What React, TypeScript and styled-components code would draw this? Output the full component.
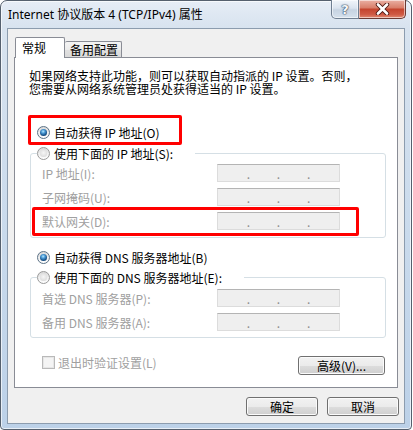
import React from 'react';
import styled, { createGlobalStyle } from 'styled-components';

const CJK_FONT = `"Noto Sans CJK SC", "Noto Sans", sans-serif`;
const TITLE_FONT = `"Noto Sans", "Noto Sans CJK SC", sans-serif`;

const GlobalStyle = createGlobalStyle`
  html, body {
    margin: 0;
    padding: 0;
    background: #ffffff;
  }
  body {
    font-family: ${CJK_FONT};
    font-size: 12px;
    color: #000;
  }
`;

const Window = styled.div`
  position: relative;
  box-sizing: border-box;
  width: 412px;
  height: 430px;
  display: flex;
  flex-direction: column;
  padding: 0 6px 5px 6px;
  border: 1px solid #55606e;
  border-radius: 7px 7px 4px 4px;
  background: linear-gradient(180deg, #e6edf6 0%, #d8e3ef 26px, #c9daec 55%, #bcd1e8 100%);
  box-shadow: inset 0 0 0 1px rgba(255, 255, 255, 0.65);
`;

const TitleBar = styled.div`
  height: 27px;
  display: flex;
  justify-content: space-between;
  align-items: flex-start;
`;

const Title = styled.div`
  margin-left: 1px;
  line-height: 28px;
  font-family: ${TITLE_FONT};
  font-size: 12px;
  color: #000;
  white-space: nowrap;
`;

const Controls = styled.div`
  display: flex;
  margin: -1px -1px 0 0;
`;

const CaptionButton = styled.div<{ $close?: boolean }>`
  box-sizing: border-box;
  height: 19px;
  width: ${p => (p.$close ? '47px' : '28px')};
  display: flex;
  align-items: center;
  justify-content: center;
  border: 1px solid ${p => (p.$close ? '#6b3a33' : '#6f7f92')};
  border-top: none;
  border-left: ${p => (p.$close ? 'none' : undefined)};
  border-radius: ${p => (p.$close ? '0 0 5px 0' : '0 0 0 5px')};
  background: ${p =>
    p.$close
      ? 'linear-gradient(180deg, #eab0a4 0%, #d9806c 42%, #c4452f 52%, #cf5a44 80%, #e08a72 100%)'
      : 'linear-gradient(180deg, #f1f5fa 0%, #dbe4ef 45%, #c6d3e2 55%, #d6e1ed 100%)'};
  box-shadow: inset 0 0 0 1px rgba(255, 255, 255, 0.55);
`;

const HelpGlyph = styled.span`
  font-family: "DejaVu Sans", sans-serif;
  font-weight: bold;
  font-size: 13px;
  line-height: 1;
  color: #f7f9fc;
  text-shadow: 0 0 1px #2e4159, 0 0 1px #2e4159, 0 0 2px #4a5d75;
`;

const Client = styled.div`
  flex: 1;
  display: flex;
  flex-direction: column;
  border: 1px solid #8c9cae;
  background: #f0f0f0;
`;

const TabStrip = styled.div`
  position: relative;
  z-index: 1;
  display: flex;
  align-items: flex-end;
  height: 20px;
  margin: 8px 0 0 7px;
`;

const Tab = styled.div<{ $active?: boolean }>`
  box-sizing: border-box;
  width: ${p => (p.$active ? '50px' : '57px')};
  height: ${p => (p.$active ? '21px' : '16px')};
  margin-bottom: ${p => (p.$active ? '-1px' : '0')};
  padding-left: ${p => (p.$active ? '6px' : '5px')};
  border: 1px solid #898c95;
  border-bottom: none;
  border-left: ${p => (p.$active ? undefined : 'none')};
  border-radius: 2px 2px 0 0;
  background: ${p =>
    p.$active ? '#ffffff' : 'linear-gradient(180deg, #f4f4f4 0%, #ececec 50%, #e1e1e1 51%, #d9d9d9 100%)'};
  line-height: ${p => (p.$active ? '19px' : '15px')};
  font-size: 12px;
  white-space: nowrap;
`;

const Panel = styled.div`
  box-sizing: border-box;
  width: 384px;
  height: 331px;
  margin-left: 6px;
  display: flex;
  flex-direction: column;
  border: 1px solid #898c95;
  background: #ffffff;
`;

const Description = styled.p`
  margin: 11px 0 0 14px;
  line-height: 13px;
  font-size: 12px;
  white-space: nowrap;
`;

const OptionRow = styled.div<{ $top: number }>`
  display: flex;
  align-items: center;
  gap: 4px;
  height: 16px;
  margin: ${p => p.$top}px 0 0 22px;
  white-space: nowrap;
`;

const RadioMark = styled.span<{ $checked?: boolean }>`
  position: relative;
  box-sizing: border-box;
  flex: none;
  width: 13px;
  height: 13px;
  border-radius: 50%;
  border: 1px solid ${p => (p.$checked ? '#5d7387' : '#9a9a9a')};
  background: linear-gradient(180deg, #d9d9d9 0%, #f2f2f2 60%, #ffffff 100%);

  &::after {
    content: '';
    position: absolute;
    inset: 2px;
    border-radius: 50%;
    background: ${p =>
      p.$checked
        ? 'radial-gradient(circle at 45% 35%, #b4e8ff 0%, #4c9bd6 30%, #175289 65%, #0a2c52 100%)'
        : 'radial-gradient(circle at 50% 40%, #f6f6f6 0%, #e2e2e2 60%, #cfcfcf 100%)'};
  }
`;

const Rows = styled.div`
  display: flex;
  flex-direction: column;
  gap: 6px;
  margin-left: 11px;
`;

const Group = styled.div<{ $top: number; $rowsTop: number; $bottom: number }>`
  display: flex;
  flex-direction: column;
  margin: ${p => p.$top}px 11px 0 15px;
  padding-bottom: ${p => p.$bottom}px;
  border: 1px solid #d5dfe5;
  border-radius: 3px;

  & > ${Rows} {
    margin-top: ${p => p.$rowsTop}px;
  }
`;

const Legend = styled.div`
  display: flex;
  align-items: center;
  gap: 4px;
  width: fit-content;
  height: 16px;
  margin: -9px 0 0 6px;
  padding-right: 22px;
  background: #ffffff;
  white-space: nowrap;
`;

const FieldRow = styled.div`
  display: flex;
  align-items: center;
  height: 18px;
`;

const FieldLabel = styled.span`
  width: 175px;
  color: #a0a0a0;
  white-space: nowrap;
`;

const IpBox = styled.div`
  box-sizing: border-box;
  width: 123px;
  height: 18px;
  display: grid;
  grid-template-columns: 1fr auto 1fr auto 1fr auto 1fr;
  align-items: center;
  padding: 0 2px;
  border: 1px solid #dcdcdc;
  border-top-color: #b4b4b4;
  background: #efefef;
`;

const IpDot = styled.span`
  font-size: 12px;
  line-height: 12px;
  padding-top: 2px;
  color: #8c8c8c;
`;

const BottomRow = styled.div`
  display: flex;
  justify-content: space-between;
  align-items: flex-start;
  margin: 18px 12px 0 27px;
`;

const CheckLabel = styled.div`
  display: flex;
  align-items: center;
  gap: 3px;
  height: 14px;
  margin-top: -1px;
  color: #a0a0a0;
  white-space: nowrap;
`;

const CheckMark = styled.span`
  box-sizing: border-box;
  width: 13px;
  height: 13px;
  border: 1px solid #b9b9b9;
  background: #f4f4f4;
  box-shadow: inset 0 0 0 1px #e6e6e6;
`;

const Button = styled.div<{ $width: number }>`
  box-sizing: border-box;
  width: ${p => p.$width}px;
  height: 19px;
  display: flex;
  align-items: center;
  justify-content: center;
  border: 1px solid #707070;
  border-radius: 3px;
  background: linear-gradient(180deg, #f2f2f2 0%, #ebebeb 50%, #dddddd 51%, #cfcfcf 100%);
  box-shadow: inset 0 0 0 1px #fbfbfb;
  font-size: 12px;
  white-space: nowrap;
`;

const Footer = styled.div`
  display: flex;
  justify-content: flex-end;
  gap: 9px;
  margin-top: 9px;
  padding-right: 5px;
`;

const Highlight = styled.div<{ $x: number; $y: number; $w: number; $h: number }>`
  position: absolute;
  box-sizing: border-box;
  left: ${p => p.$x}px;
  top: ${p => p.$y}px;
  width: ${p => p.$w}px;
  height: ${p => p.$h}px;
  border: 3px solid #ff0000;
  border-radius: 2px;
  pointer-events: none;
`;

const CloseIcon = () => (
  <svg width="15" height="12" viewBox="0 0 15 12">
    <path d="M3 1.5 L12 10.5 M12 1.5 L3 10.5" stroke="#4a1510" strokeWidth="4.4" strokeLinecap="round" />
    <path d="M3 1.5 L12 10.5 M12 1.5 L3 10.5" stroke="#ffffff" strokeWidth="2.6" strokeLinecap="round" />
  </svg>
);

const IpField = () => (
  <IpBox>
    <span />
    <IpDot>.</IpDot>
    <span />
    <IpDot>.</IpDot>
    <span />
    <IpDot>.</IpDot>
    <span />
  </IpBox>
);

const ipRows = ['IP 地址(I):', '子网掩码(U):', '默认网关(D):'];
const dnsRows = ['首选 DNS 服务器(P):', '备用 DNS 服务器(A):'];

export default function App() {
  return (
    <>
      <GlobalStyle />
      <Window>
        <TitleBar>
          <Title>Internet 协议版本 4 (TCP/IPv4) 属性</Title>
          <Controls>
            <CaptionButton>
              <HelpGlyph>?</HelpGlyph>
            </CaptionButton>
            <CaptionButton $close>
              <CloseIcon />
            </CaptionButton>
          </Controls>
        </TitleBar>
        <Client>
          <TabStrip>
            <Tab $active>常规</Tab>
            <Tab>备用配置</Tab>
          </TabStrip>
          <Panel>
            <Description>
              如果网络支持此功能，则可以获取自动指派的 IP 设置。否则，
              <br />
              您需要从网络系统管理员处获得适当的 IP 设置。
            </Description>

            <OptionRow $top={29}>
              <RadioMark $checked />
              自动获得 IP 地址(O)
            </OptionRow>

            <Group $top={13} $rowsTop={3} $bottom={7}>
              <Legend>
                <RadioMark />
                使用下面的 IP 地址(S):
              </Legend>
              <Rows>
                {ipRows.map(label => (
                  <FieldRow key={label}>
                    <FieldLabel>{label}</FieldLabel>
                    <IpField />
                  </FieldRow>
                ))}
              </Rows>
            </Group>

            <OptionRow $top={11}>
              <RadioMark $checked />
              自动获得 DNS 服务器地址(B)
            </OptionRow>

            <Group $top={12} $rowsTop={4} $bottom={6}>
              <Legend>
                <RadioMark />
                使用下面的 DNS 服务器地址(E):
              </Legend>
              <Rows>
                {dnsRows.map(label => (
                  <FieldRow key={label}>
                    <FieldLabel>{label}</FieldLabel>
                    <IpField />
                  </FieldRow>
                ))}
              </Rows>
            </Group>

            <BottomRow>
              <CheckLabel>
                <CheckMark />
                退出时验证设置(L)
              </CheckLabel>
              <Button $width={87}>高级(V)...</Button>
            </BottomRow>
          </Panel>
          <Footer>
            <Button $width={72}>确定</Button>
            <Button $width={72}>取消</Button>
          </Footer>
        </Client>

        <Highlight $x={27} $y={114} $w={154} $h={30} />
        <Highlight $x={31} $y={206} $w={327} $h={29} />
      </Window>
    </>
  );
}
